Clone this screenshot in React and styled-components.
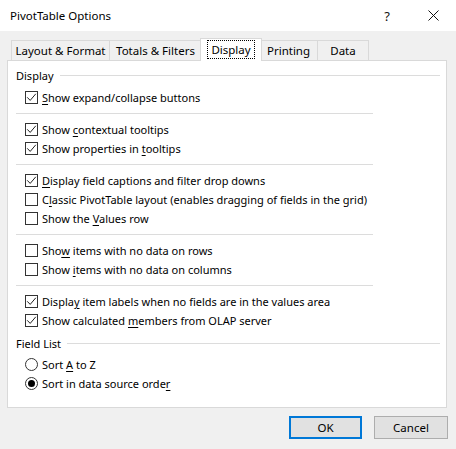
import styled, { createGlobalStyle } from "styled-components";

const GlobalStyle = createGlobalStyle`
  html, body {
    margin: 0;
    padding: 0;
    background: #f0f0f0;
  }
  body {
    font-family: "Noto Sans", "Open Sans", "DejaVu Sans", sans-serif;
    font-size: 11px;
    color: #000;
  }
`;

const Window = styled.div`
  width: 456px;
  height: 449px;
  background: #f0f0f0;
  display: flex;
  flex-direction: column;
  overflow: hidden;
`;

const TitleBar = styled.div`
  height: 31px;
  background: #fff;
  display: flex;
  align-items: center;
  padding-left: 10px;
`;

const Title = styled.div`
  flex: 1;
  font-size: 11.5px;
`;

const TitleButton = styled.div`
  width: 46px;
  height: 31px;
  display: flex;
  align-items: center;
  justify-content: center;
  font-size: 13px;
  color: #111;
`;

const TabStrip = styled.div`
  display: flex;
  align-items: flex-end;
  height: 22px;
  margin-top: 7px;
  padding-left: 11px;
`;

const Tab = styled.div`
  box-sizing: border-box;
  width: ${(p) => p.$w}px;
  height: ${(p) => (p.$active ? "23px" : "20px")};
  margin: 0 ${(p) => (p.$active ? "-2px" : "0")};
  margin-bottom: ${(p) => (p.$active ? "-1px" : "0")};
  border: 1px solid #d9d9d9;
  border-bottom: none;
  border-left: ${(p) => (p.$first || p.$active ? "1px solid #d9d9d9" : "none")};
  background: ${(p) => (p.$active ? "#fff" : "#f0f0f0")};
  position: relative;
  z-index: ${(p) => (p.$active ? 2 : 1)};
  display: flex;
  align-items: center;
  justify-content: center;
  font-size: 11.5px;
`;

const FocusLabel = styled.span`
  outline: 1px dotted #000;
  padding: 0 3px;
  line-height: 17px;
  margin-top: -1px;
`;

const Panel = styled.div`
  margin: 0 9px 0 7px;
  height: 348px;
  box-sizing: border-box;
  background: #fff;
  border: 1px solid #d9d9d9;
  padding: 5px 6px 0 8px;
  position: relative;
  z-index: 1;
`;

const GroupHeader = styled.div`
  display: flex;
  align-items: center;
  height: 19px;
  margin-top: ${(p) => p.$top || 0}px;
  margin-bottom: ${(p) => p.$gap}px;
  &::after {
    content: "";
    flex: 1;
    height: 1px;
    background: #dcdcdc;
    margin-left: 6px;
  }
`;

const Row = styled.label`
  display: flex;
  align-items: center;
  height: 19px;
  padding-left: 9px;
  white-space: nowrap;
`;

const Box = styled.span`
  width: 13px;
  height: 13px;
  box-sizing: border-box;
  border: 1px solid #333;
  background: #fff;
  margin-right: 4px;
  display: flex;
  align-items: center;
  justify-content: center;
  flex-shrink: 0;
`;

const Radio = styled(Box)`
  border-radius: 50%;
  &::after {
    content: "";
    display: ${(p) => (p.$on ? "block" : "none")};
    width: 7px;
    height: 7px;
    border-radius: 50%;
    background: #000;
  }
`;

const Separator = styled.div`
  height: 1px;
  width: 357px;
  background: #dcdcdc;
  margin: 6px 0;
`;

const Footer = styled.div`
  display: flex;
  justify-content: flex-end;
  gap: 12px;
  padding: 8px 8px 0 0;
`;

const Button = styled.div`
  width: ${(p) => p.$w}px;
  height: 23px;
  box-sizing: border-box;
  background: #e1e1e1;
  border: ${(p) => (p.$default ? "2px solid #0078d7" : "1px solid #adadad")};
  display: flex;
  align-items: center;
  justify-content: center;
  font-size: 11.5px;
`;

const U = styled.u`
  text-decoration: underline;
  text-underline-offset: 2px;
`;

const Check = () => (
  <svg width="11" height="11" viewBox="0 0 11 11">
    <path d="M1.2 5.3 L4.2 8.4 L9.8 1.8" fill="none" stroke="#222" strokeWidth="1" />
  </svg>
);

function CheckRow({ on, children }) {
  return (
    <Row>
      <Box>{on && <Check />}</Box>
      <span>{children}</span>
    </Row>
  );
}

function RadioRow({ on, children }) {
  return (
    <Row>
      <Radio $on={on} />
      <span>{children}</span>
    </Row>
  );
}

export default function App() {
  return (
    <>
      <GlobalStyle />
      <Window>
        <TitleBar>
          <Title>PivotTable Options</Title>
          <TitleButton>?</TitleButton>
          <TitleButton>
            <svg width="11" height="11" viewBox="0 0 11 11">
              <path d="M0.5 0.5 L10.5 10.5 M10.5 0.5 L0.5 10.5" stroke="#111" strokeWidth="1" />
            </svg>
          </TitleButton>
        </TitleBar>

        <TabStrip>
          <Tab $first $w={99}>Layout &amp; Format</Tab>
          <Tab $w={92}>Totals &amp; Filters</Tab>
          <Tab $active $w={62}>
            <FocusLabel>Display</FocusLabel>
          </Tab>
          <Tab $w={58}>Printing</Tab>
          <Tab $w={51}>Data</Tab>
        </TabStrip>

        <Panel>
          <GroupHeader $gap={3}>Display</GroupHeader>
          <CheckRow on>
            <U>S</U>how expand/collapse buttons
          </CheckRow>
          <Separator />
          <CheckRow on>
            Show <U>c</U>ontextual tooltips
          </CheckRow>
          <CheckRow on>
            Show properties in <U>t</U>ooltips
          </CheckRow>
          <Separator />
          <CheckRow on>
            <U>D</U>isplay field captions and filter drop downs
          </CheckRow>
          <CheckRow>
            C<U>l</U>assic PivotTable layout (enables dragging of fields in the grid)
          </CheckRow>
          <CheckRow>
            Show the <U>V</U>alues row
          </CheckRow>
          <Separator />
          <CheckRow>
            Sho<U>w</U> items with no data on rows
          </CheckRow>
          <CheckRow>
            Show <U>i</U>tems with no data on columns
          </CheckRow>
          <Separator />
          <CheckRow on>
            Displa<U>y</U> item labels when no fields are in the values area
          </CheckRow>
          <CheckRow on>
            Show calculated <U>m</U>embers from OLAP server
          </CheckRow>
          <GroupHeader $top={4} $gap={2}>Field List</GroupHeader>
          <RadioRow>
            Sort <U>A</U> to Z
          </RadioRow>
          <RadioRow on>
            Sort in data source orde<U>r</U>
          </RadioRow>
        </Panel>

        <Footer>
          <Button $default $w={73}>OK</Button>
          <Button $w={74}>Cancel</Button>
        </Footer>
      </Window>
    </>
  );
}
